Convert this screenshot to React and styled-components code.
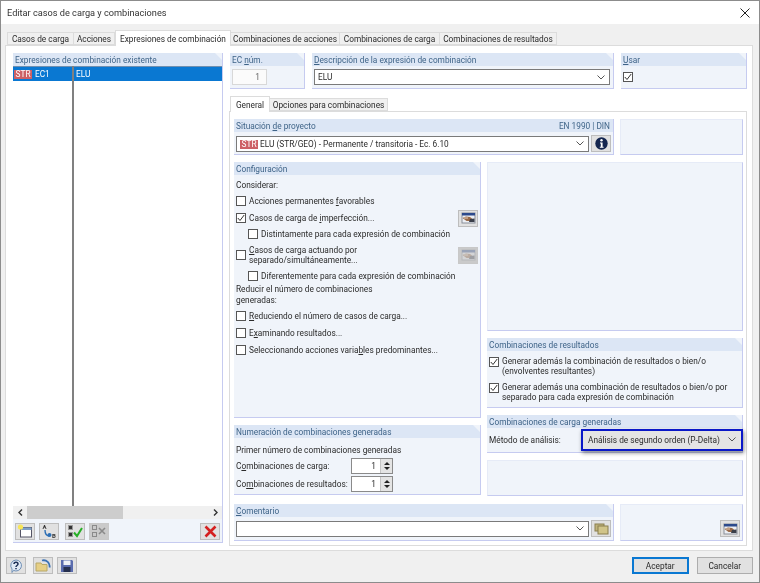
import React from "react"
import styled, { createGlobalStyle } from "styled-components"

const Global = createGlobalStyle`
  html, body { margin: 0; padding: 0; background: #f0f0f0; }
  * { box-sizing: border-box; }
  body { font-family: Roboto, "Liberation Sans", sans-serif; font-size: 8.3px; color: #2b2b2b; }
`

const Window = styled.div`
  width: 760px;
  height: 583px;
  display: flex;
  flex-direction: column;
  border: 1px solid #8c8c8c;
  background: #f0f0f0;
  overflow: hidden;
  filter: blur(0.25px);
`
const TitleBar = styled.div`
  height: 23px;
  background: #fff;
  display: flex;
  align-items: center;
  justify-content: space-between;
  padding: 0 9px 0 6px;
  font-size: 9.2px;
  color: #333;
`
const Body = styled.div`
  flex: 1;
  padding: 6px 6px 0 4px;
  display: flex;
  flex-direction: column;
`
const TabRow = styled.div`
  display: flex;
  height: 15px;
  align-items: flex-end;
  padding-left: ${p => p.$inset || 2}px;
  position: relative;
  z-index: 1;
`
const Tab = styled.div`
  height: ${p => (p.$active ? "16px" : "13px")};
  width: ${p => p.$w}px;
  display: flex;
  align-items: center;
  justify-content: center;
  background: ${p => (p.$active ? "#fff" : "#f0f0f0")};
  border: 1px solid #dcdcdc;
  border-left-width: ${p => (p.$active ? 1 : 0)}px;
  border-bottom: ${p => (p.$active ? "none" : "1px solid #dcdcdc")};
  margin-bottom: ${p => (p.$active ? "-1px" : "0")};
  white-space: nowrap;
  &:first-child { border-left-width: 1px; }
`
const Pane = styled.div`
  height: 506px;
  background: #fff;
  border: 1px solid #dcdcdc;
  padding: 7px 5px 7px 7px;
  display: grid;
  grid-template-columns: 210px 1fr;
  gap: 7px;
`
const Group = styled.div`
  background: #f0f4fa;
  border-right: 1px solid #c6cbf0;
  border-bottom: 1px solid #c6cbf0;
  display: flex;
  flex-direction: column;
  ${p => p.$h && `height: ${p.$h}px;`}
  ${p => p.$w && `width: ${p.$w}px;`}
`
const GroupHead = styled.div`
  height: 13px;
  flex: none;
  background: #dce6f5;
  color: #3f6488;
  padding: 0 3px 0 2px;
  display: flex;
  justify-content: space-between;
  align-items: center;
  white-space: nowrap;
  clip-path: ${p => (p.$square ? "none" : "polygon(0 0, calc(100% - 7px) 0, 100% 7px, 100% 100%, 0 100%)")};
`
const Blank = styled.div`
  background: #f0f4fa;
  border: 1px solid #e6ebf7;
  border-right-color: #c6cbf0;
  border-bottom-color: #c6cbf0;
  display: flex;
  align-items: flex-end;
  justify-content: flex-end;
  padding: 0 2px 3px 0;
  ${p => p.$h && `height: ${p.$h}px;`}
  ${p => p.$w && `width: ${p.$w}px;`}
`
const LeftColumn = styled(Group)`
  height: 490px;
`
const ListArea = styled.div`
  flex: 1;
  background: #fff;
  display: grid;
  grid-template-columns: 60px 1fr;
  grid-template-rows: 15px 1fr;
`
const ListCell = styled.div`
  background: #0a78d2;
  color: #fff;
  display: flex;
  align-items: center;
  gap: 3px;
  padding-left: ${p => p.$pad || 1}px;
  border-top: 1px solid #6f8fb0;
`
const ListDivider = styled.div`
  border-left: 2px solid #808080;
  margin-left: 59px;
  grid-column: 1 / 3;
  margin-top: -15px;
`
const Badge = styled.span`
  background: #cd6065;
  color: #fff;
  padding: 0 1.5px;
  height: 9px;
  line-height: 9px;
  display: inline-block;
`
const ScrollBar = styled.div`
  height: 13px;
  background: #f0f0f0;
  display: flex;
  align-items: center;
`
const ScrollEnd = styled.div`
  width: 14px;
  display: flex;
  justify-content: center;
`
const ScrollThumb = styled.div`
  width: 96px;
  height: 100%;
  background: #cdcdcd;
  margin-right: auto;
`
const ToolRow = styled.div`
  height: 23px;
  display: flex;
  align-items: center;
  padding: 1px 2px 0;
`
const IconBtn = styled.div`
  width: ${p => p.$w || 20}px;
  height: 17px;
  flex: none;
  display: flex;
  align-items: center;
  justify-content: center;
  background: ${p => (p.$off ? "#cacaca" : "#e1e1e1")};
  border: 1px solid ${p => (p.$off ? "#c8c8c8" : "#bdbdbd")};
  margin-left: ${p => p.$ml || 0}px;
`
const RightColumn = styled.div`
  display: flex;
  flex-direction: column;
  min-width: 0;
`
const TopRow = styled.div`
  display: flex;
  gap: 7px;
  height: 36px;
`
const InnerTabs = styled(TabRow)`
  margin-top: 7px;
  margin-left: -1px;
`
const InnerPane = styled.div`
  width: 518px;
  height: 435px;
  margin-left: -1px;
  background: #fff;
  border: 1px solid #dcdcdc;
  padding: 7px 3px 0 4px;
  display: grid;
  grid-template-columns: 247px 256px;
  column-gap: 6px;
  align-content: start;
`
const FullRow = styled.div`
  grid-column: 1 / 3;
  display: flex;
  justify-content: space-between;
  margin-top: ${p => p.$mt || 0}px;
`
const Stack = styled.div`
  display: flex;
  flex-direction: column;
  gap: 7px;
  margin-top: 7px;
`
const Select = styled.div`
  height: 16px;
  background: #fff;
  border: 1px solid #7a7a7a;
  display: flex;
  align-items: center;
  justify-content: space-between;
  padding: 0 4px 0 3px;
  flex: 1;
  gap: 2px;
  white-space: nowrap;
`
const GroupBody = styled.div`
  padding: ${p => p.$pad || "3px 2px"};
  display: flex;
  align-items: ${p => p.$align || "stretch"};
  gap: ${p => p.$gap || 0}px;
  flex-direction: ${p => (p.$row ? "row" : "column")};
  flex: 1;
`
const NumBox = styled.div`
  width: 35px;
  height: 16px;
  margin: 3px 0 0 2px;
  background: #fbfbfb;
  border: 1px solid #d8d8d8;
  text-align: right;
  padding-right: 6px;
  line-height: 14px;
  color: #666;
`
const Box = styled.span`
  width: 10px;
  height: 10px;
  flex: none;
  background: #fff;
  border: 1px solid #555;
  display: inline-flex;
  align-items: center;
  justify-content: center;
  margin-top: ${p => (p.$top ? "1px" : "0")};
`
const CheckRow = styled.div`
  display: flex;
  align-items: ${p => (p.$top ? "flex-start" : "center")};
  gap: 3px;
  line-height: 10px;
  padding-left: ${p => p.$indent || 0}px;
  height: ${p => p.$h || 16}px;
  white-space: nowrap;
`
const CheckLabel = styled.span`
  flex: 1;
`
const U = styled.u`
  text-underline-offset: 1px;
`
const Plain = styled.div`
  line-height: 10.5px;
  height: ${p => p.$h || 16}px;
  display: flex;
  align-items: center;
  white-space: nowrap;
`
const SpinRow = styled.div`
  display: flex;
  align-items: center;
  justify-content: space-between;
  width: 157px;
  height: 16px;
  margin-bottom: 2px;
`
const Spin = styled.div`
  display: flex;
  width: 42px;
  height: 16px;
  background: #fff;
  border: 1px solid #8a8a8a;
`
const SpinValue = styled.div`
  width: 28px;
  text-align: right;
  padding-right: 4px;
  line-height: 14px;
`
const SpinArrows = styled.div`
  flex: 1;
  background: #e4e4e4;
  border-left: 1px solid #c4c4c4;
  display: flex;
  flex-direction: column;
  align-items: center;
  justify-content: space-evenly;
`
const Arrow = styled.i`
  width: 0;
  height: 0;
  border-left: 3px solid transparent;
  border-right: 3px solid transparent;
  ${p => (p.$down ? "border-top: 3px solid #222;" : "border-bottom: 3px solid #222;")}
`
const MethodLabel = styled.span`
  white-space: nowrap;
`
const Focused = styled.div`
  width: 162px;
  height: 22px;
  margin-left: auto;
  margin-right: -1px;
  background: #e4e4e4;
  border: 2px solid #0a18c8;
  box-shadow: 1px 2px 4px rgba(0, 0, 0, 0.45);
  display: flex;
  align-items: center;
  justify-content: space-between;
  padding: 0 5px;
  white-space: nowrap;
  position: relative;
  z-index: 1;
`
const Footer = styled.div`
  height: 31px;
  display: flex;
  align-items: center;
  padding: 0 0 2px 1px;
`
const DialogButton = styled.div`
  width: ${p => p.$w}px;
  height: 17px;
  background: #e1e1e1;
  border: ${p => (p.$primary ? "2px solid #0a78d2" : "1px solid #adadad")};
  display: flex;
  align-items: center;
  justify-content: center;
  margin-left: ${p => p.$ml || 0}px;
`

const Chevron = () => (
  <svg width="8" height="5" viewBox="0 0 8 5"><path d="M.5.5 4 4 7.5.5" fill="none" stroke="#555" /></svg>
)
const ScrollArrow = ({ right }) => (
  <svg width="5" height="7" viewBox="0 0 5 7">
    <path d={right ? "M1 .5 4 3.5 1 6.500" : "M4 .5 1 3.500 4 6.500"} fill="none" stroke="#333" strokeWidth="1.400" />
  </svg>
)
const Tick = () => (
  <svg width="8" height="8" viewBox="0 0 8 8"><path d="M.8 4 3 6.500 7.200 1" fill="none" stroke="#333" /></svg>
)
const CheckBox = ({ on, top }) => <Box $top={top}>{on && <Tick />}</Box>

// load case dialog glyph used on the small grey buttons
const PanelIcon = ({ off }) => (
  <svg width="15" height="12" viewBox="0 0 15 12" opacity={off ? 0.3 : 1}>
    <rect x="1" y="1" width="13" height="10" fill="#eceff4" stroke="#8a8f9a" />
    <rect x="1" y="1" width="13" height="2.500" fill="#2c4a8c" />
    <path d="M1.500 6 5 4.500l4 .5 2 1.500-2 2.500H5.500z" fill="#9a6a48" />
    <path d="M9 7l4.500-.5V10H8z" fill="#3a3f4a" />
    <path d="M3 6h4" stroke="#e6d2bd" />
  </svg>
)
const NewIcon = () => (
  <svg width="16" height="14" viewBox="0 0 16 14">
    <rect x="3.500" y="3.500" width="11" height="9.500" fill="#fff" stroke="#556" />
    <rect x="3.500" y="3.500" width="11" height="2.500" fill="#7ea0c8" />
    <circle cx="3.500" cy="3" r="2.600" fill="#f7e65a" />
  </svg>
)
const TinyLetter = styled.text`
  font-size: 6px;
  font-weight: 700;
  fill: #333;
`
const AbIcon = () => (
  <svg width="16" height="14" viewBox="0 0 16 14">
    <TinyLetter x="1.500" y="5">A</TinyLetter>
    <path d="M4 6c0 4 1 5.500 4 6" fill="none" stroke="#2d6fb5" strokeWidth="1.400" />
    <circle cx="8.500" cy="11" r="2" fill="#2d6fb5" />
    <TinyLetter x="11" y="13.500">B</TinyLetter>
  </svg>
)
const CheckListIcon = () => (
  <svg width="16" height="14" viewBox="0 0 16 14">
    <rect x="1.500" y="1.500" width="4" height="4" fill="#333" stroke="#999" />
    <rect x="1.500" y="8.500" width="4" height="4" fill="#333" stroke="#999" />
    <path d="M7 8.500 10 12l5-8" fill="none" stroke="#27b027" strokeWidth="2" />
  </svg>
)
const UncheckIcon = () => (
  <svg width="16" height="14" viewBox="0 0 16 14">
    <rect x="1.500" y="1.500" width="4" height="4" fill="none" stroke="#8a8a8a" />
    <rect x="1.500" y="8.500" width="4" height="4" fill="none" stroke="#8a8a8a" />
    <path d="m8 4 6 6m0-6-6 6" stroke="#8a8a8a" strokeWidth="1.600" />
  </svg>
)
const DeleteIcon = () => (
  <svg width="13" height="13" viewBox="0 0 13 13"><path d="m1.500 1.500 10 10m0-10-10 10" stroke="#d42020" strokeWidth="2.600" /></svg>
)
const InfoIcon = () => (
  <svg width="13" height="13" viewBox="0 0 13 13">
    <circle cx="6.500" cy="6.500" r="6.200" fill="#14264f" />
    <circle cx="6.500" cy="3.200" r="1.200" fill="#fff" />
    <path d="M5 5.500h2.600v4.200h1v1H4.800v-1h1V6.500H5z" fill="#fff" />
  </svg>
)
const HelpIcon = () => (
  <svg width="14" height="14" viewBox="0 0 14 14">
    <path d="M7 1a5.500 5.500 0 1 1-2.500 10.400L3 13.500V10A5.500 5.500 0 0 1 7 1z" fill="#dfe9f5" stroke="#6f8fb5" />
    <path d="M5 5c0-2.500 4-2.500 4 0 0 1.500-2 1.500-2 3M7 9v1.200" fill="none" stroke="#1d2f57" strokeWidth="1.500" />
  </svg>
)
const FolderIcon = () => (
  <svg width="16" height="14" viewBox="0 0 16 14">
    <path d="M7 1.500a6 6 0 0 1 7.500 7" fill="none" stroke="#3b72b5" strokeWidth="1.800" />
    <path d="M1 4h5l1 1.500h5V12H1z" fill="#e6cf85" stroke="#b8a868" />
  </svg>
)
const SaveIcon = () => (
  <svg width="14" height="14" viewBox="0 0 14 14">
    <path d="M1 1h11l1 1v11H1z" fill="#5a6cae" />
    <rect x="3.500" y="1.500" width="7" height="4.500" fill="#eef1f7" />
    <rect x="3.500" y="8" width="7" height="5" fill="#26304f" />
  </svg>
)
const CopyIcon = () => (
  <svg width="15" height="12" viewBox="0 0 15 12">
    <rect x="1" y="1" width="9" height="7" fill="#bfb37a" stroke="#8a7f4e" />
    <rect x="4" y="3" width="10" height="8" fill="#d0c489" stroke="#8a7f4e" />
  </svg>
)
const CloseIcon = () => (
  <svg width="10" height="10" viewBox="0 0 10 10"><path d="m.5.5 9 9m0-9-9 9" stroke="#222" /></svg>
)

const Spinner = () => (
  <Spin><SpinValue>1</SpinValue><SpinArrows><Arrow /><Arrow $down /></SpinArrows></Spin>
)

export default function App() {
  return (
    <Window>
      <Global />
      <TitleBar>
        <span>Editar casos de carga y combinaciones</span>
        <CloseIcon />
      </TitleBar>
      <Body>
        <TabRow>
          <Tab $w={67}>Casos de carga</Tab>
          <Tab $w={41}>Acciones</Tab>
          <Tab $active $w={116}>Expresiones de combinación</Tab>
          <Tab $w={109}>Combinaciones de acciones</Tab>
          <Tab $w={100}>Combinaciones de carga</Tab>
          <Tab $w={117}>Combinaciones de resultados</Tab>
        </TabRow>
        <Pane>
          <LeftColumn>
            <GroupHead>Expresiones de combinación existente</GroupHead>
            <ListArea>
              <ListCell><Badge>STR</Badge> EC1</ListCell>
              <ListCell $pad={3}>ELU</ListCell>
              <ListDivider />
            </ListArea>
            <ScrollBar>
              <ScrollEnd><ScrollArrow /></ScrollEnd>
              <ScrollThumb />
              <ScrollEnd><ScrollArrow right /></ScrollEnd>
            </ScrollBar>
            <ToolRow>
              <IconBtn><NewIcon /></IconBtn>
              <IconBtn $ml={4}><AbIcon /></IconBtn>
              <IconBtn $ml={6}><CheckListIcon /></IconBtn>
              <IconBtn $ml={4} $off><UncheckIcon /></IconBtn>
              <IconBtn $ml={91}><DeleteIcon /></IconBtn>
            </ToolRow>
          </LeftColumn>
          <RightColumn>
            <TopRow>
              <Group $w={75}>
                <GroupHead><span>EC <U>n</U>úm.</span></GroupHead>
                <NumBox>1</NumBox>
              </Group>
              <Group $w={302}>
                <GroupHead><span><U>D</U>escripción de la expresión de combinación</span></GroupHead>
                <GroupBody $pad="3px 3px 0 2px" $row>
                  <Select>ELU<Chevron /></Select>
                </GroupBody>
              </Group>
              <Group $w={126}>
                <GroupHead><span><U>U</U>sar</span></GroupHead>
                <GroupBody $pad="6px 2px"><CheckBox on /></GroupBody>
              </Group>
            </TopRow>
            <InnerTabs $inset={1}>
              <Tab $active $w={40}>General</Tab>
              <Tab $w={118}>Opciones para combinaciones</Tab>
            </InnerTabs>
            <InnerPane>
              <FullRow>
                <Group $w={380} $h={36}>
                  <GroupHead $square>
                    <span>Situación <U>d</U>e proyecto</span>
                    <span>EN 1990 | DIN</span>
                  </GroupHead>
                  <GroupBody $row $gap={2} $align="center" $pad="3px 2px">
                    <Select><span><Badge>STR</Badge> ELU (STR/GEO) - Permanente / transitoria - Ec. 6.10</span><Chevron /></Select>
                    <IconBtn><InfoIcon /></IconBtn>
                  </GroupBody>
                </Group>
                <Blank $w={123} $h={36} />
              </FullRow>
              <Stack>
                <Group $h={256}>
                  <GroupHead>Configuración</GroupHead>
                  <GroupBody>
                    <Plain $h={14}>Considerar:</Plain>
                    <CheckRow $h={18}><CheckBox /><span>Acciones permanentes <U>f</U>avorables</span></CheckRow>
                    <CheckRow $h={16}>
                      <CheckBox on />
                      <CheckLabel>Casos de carga de <U>i</U>mperfección...</CheckLabel>
                      <IconBtn><PanelIcon /></IconBtn>
                    </CheckRow>
                    <CheckRow $indent={12}><CheckBox /><span>Distintamente para cada expresión de combinación</span></CheckRow>
                    <CheckRow $h={26}>
                      <CheckBox />
                      <CheckLabel><U>C</U>asos de carga actuando por<br />separado/simultáneamente...</CheckLabel>
                      <IconBtn $off><PanelIcon off /></IconBtn>
                    </CheckRow>
                    <CheckRow $indent={12}><CheckBox /><span>Diferentemente para cada expresión de combinación</span></CheckRow>
                    <Plain $h={21}>Reducir el número de combinaciones<br />generadas:</Plain>
                    <CheckRow $h={22}><CheckBox /><span><U>R</U>educiendo el número de casos de carga...</span></CheckRow>
                    <CheckRow $h={12}><CheckBox /><span>E<U>x</U>aminando resultados...</span></CheckRow>
                    <CheckRow $h={22}><CheckBox /><span>Seleccionando acciones varia<U>b</U>les predominantes...</span></CheckRow>
                  </GroupBody>
                </Group>
                <Group $h={70}>
                  <GroupHead>Numeración de combinaciones generadas</GroupHead>
                  <GroupBody $pad="5px 2px 0">
                    <Plain $h={15}>Primer número de combinaciones generadas</Plain>
                    <SpinRow>
                      <span>C<U>o</U>mbinaciones de carga:</span>
                      <Spinner />
                    </SpinRow>
                    <SpinRow>
                      <span>Co<U>m</U>binaciones de resultados:</span>
                      <Spinner />
                    </SpinRow>
                  </GroupBody>
                </Group>
              </Stack>
              <Stack>
                <Blank $h={169} />
                <Group $h={70}>
                  <GroupHead>Combinaciones de resultados</GroupHead>
                  <GroupBody $pad="5px 2px 0">
                    <CheckRow $h={26} $top><CheckBox on top /><span>Generar además la combinación de resultados o bien/o<br />(envolventes resultantes)</span></CheckRow>
                    <CheckRow $h={26} $top><CheckBox on top /><span>Generar además una combinación de resultados o bien/o por<br />separado para cada expresión de combinación</span></CheckRow>
                  </GroupBody>
                </Group>
                <Group $h={38}>
                  <GroupHead>Combinaciones de carga generadas</GroupHead>
                  <GroupBody $row $align="center" $pad="0 0 1px 2px">
                    <MethodLabel>Método de análisis:</MethodLabel>
                    <Focused>Análisis de segundo orden (P-Delta)<Chevron /></Focused>
                  </GroupBody>
                </Group>
                <Blank $h={36} />
              </Stack>
              <FullRow $mt={8}>
                <Group $w={380} $h={37}>
                  <GroupHead><span><U>C</U>omentario</span></GroupHead>
                  <GroupBody $row $gap={2} $align="center" $pad="3px 2px">
                    <Select><span /><Chevron /></Select>
                    <IconBtn><CopyIcon /></IconBtn>
                  </GroupBody>
                </Group>
                <Blank $w={123} $h={37}>
                  <IconBtn><PanelIcon /></IconBtn>
                </Blank>
              </FullRow>
            </InnerPane>
          </RightColumn>
        </Pane>
        <Footer>
          <IconBtn><HelpIcon /></IconBtn>
          <IconBtn $ml={7}><FolderIcon /></IconBtn>
          <IconBtn $ml={4}><SaveIcon /></IconBtn>
          <DialogButton $w={57} $primary $ml={555}>Aceptar</DialogButton>
          <DialogButton $w={57} $ml={8}>Cancelar</DialogButton>
        </Footer>
      </Body>
    </Window>
  )
}
